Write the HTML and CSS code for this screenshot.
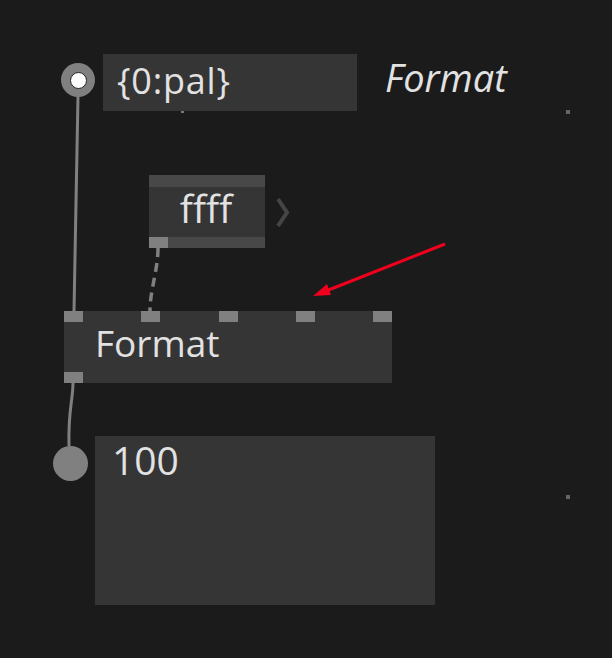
FILE: index.html
```html
<!DOCTYPE html>
<html>
<head>
<meta charset="utf-8">
<link rel="stylesheet" href="styles.css">
</head>
<body>
<div class="canvas">
  <svg class="wires" width="612" height="658" viewBox="0 0 612 658">
    <path d="M78 96 L74 311" class="wire"/>
    <path d="M158 248 C158 270 150 290 150 311" class="wire dashed"/>
    <path d="M73 383 C73 400 68 410 69 446" class="wire"/>
    <polyline points="278,199 287,212.5 278,226" class="chevron"/>
    <line x1="445" y1="244" x2="326" y2="291" class="arrow-line"/>
    <polygon points="313,296 327,284 331,295" class="arrow-head"/>
  </svg>

  <div class="iobox-in">
    <span class="io-label">{0:pal}</span>
    <span class="tick"></span>
  </div>
  <div class="pin-in"><span class="pin-in-core"></span></div>

  <div class="comment">Format</div>
  <div class="dot dot-a"></div>
  <div class="dot dot-b"></div>

  <div class="node-ffff">
    <div class="bar"></div>
    <div class="ffff-body">ffff</div>
    <div class="bar bar-bottom"><span class="pin"></span></div>
  </div>

  <div class="node-format">
    <div class="pins-top">
      <span class="pin"></span><span class="pin"></span><span class="pin"></span><span class="pin"></span><span class="pin"></span>
    </div>
    <div class="format-label">Format</div>
    <div class="pins-bottom"><span class="pin"></span></div>
  </div>

  <div class="pin-out"></div>
  <div class="iobox-out">100</div>
</div>
</body>
</html>
```

FILE: styles.css
```css
html, body {
  margin: 0;
  padding: 0;
  background: #1b1b1b;
}
.canvas {
  position: relative;
  width: 612px;
  height: 658px;
  overflow: hidden;
  background: #1b1b1b;
  font-family: "Open Sans", "Noto Sans", sans-serif;
  color: #e2e2e2;
}
.wires {
  position: absolute;
  left: 0;
  top: 0;
  z-index: 1;
}
.wire {
  fill: none;
  stroke: #808080;
  stroke-width: 3;
}
.dashed {
  stroke-dasharray: 9 6;
  stroke-width: 3.5;
}
.chevron {
  fill: none;
  stroke: #454545;
  stroke-width: 4;
}
.arrow-line {
  stroke: #f0001c;
  stroke-width: 3;
}
.arrow-head {
  fill: #f0001c;
}
.iobox-in {
  position: absolute;
  left: 103px;
  top: 54px;
  width: 254px;
  height: 57px;
  background: #353535;
  box-sizing: border-box;
  padding-left: 14px;
  padding-top: 5px;
  font-size: 36px;
  line-height: 44px;
  letter-spacing: 0.8px;
}
.tick {
  position: absolute;
  left: 78px;
  top: 57px;
  width: 3px;
  height: 2px;
  background: #777;
}
.pin-in {
  position: absolute;
  left: 61px;
  top: 63px;
  width: 34px;
  height: 34px;
  border-radius: 50%;
  background: #808080;
  display: flex;
  align-items: center;
  justify-content: center;
  z-index: 2;
}
.pin-in-core {
  width: 15px;
  height: 15px;
  border-radius: 50%;
  background: #fff;
  border: 1px solid #222;
}
.comment {
  position: absolute;
  left: 385px;
  top: 55px;
  font-size: 38px;
  font-style: italic;
  line-height: 44px;
}
.dot {
  position: absolute;
  width: 4px;
  height: 4px;
  background: #666;
}
.dot-a { left: 566px; top: 110px; }
.dot-b { left: 566px; top: 495px; }
.node-ffff {
  position: absolute;
  left: 149px;
  top: 175px;
  width: 116px;
  height: 73px;
  display: flex;
  flex-direction: column;
  background: #353535;
}
.bar {
  height: 12px;
  background: #484848;
  position: relative;
}
.bar-bottom {
  height: 11px;
}
.ffff-body {
  height: 50px;
  box-sizing: border-box;
  font-size: 39px;
  line-height: 41px;
  padding-bottom: 9px;
  text-align: center;
  padding-right: 2px;
}
.node-ffff .pin {
  position: absolute;
  left: 0;
  top: 0;
  width: 19px;
  height: 11px;
  background: #808080;
}
.node-format {
  position: absolute;
  left: 64px;
  top: 311px;
  width: 328px;
  height: 72px;
  background: #353535;
  z-index: 2;
  display: flex;
  flex-direction: column;
}
.pins-top {
  display: flex;
  justify-content: space-between;
  height: 11px;
}
.pin {
  display: block;
  width: 19px;
  height: 11px;
  background: #808080;
}
.format-label {
  height: 50px;
  padding-left: 31px;
  font-size: 37px;
  line-height: 48px;
  margin-top: -3px;
  margin-bottom: 3px;
}
.pins-bottom {
  height: 11px;
  display: flex;
}
.pin-out {
  position: absolute;
  left: 53px;
  top: 446px;
  width: 35px;
  height: 35px;
  border-radius: 50%;
  background: #808080;
  z-index: 2;
}
.iobox-out {
  position: absolute;
  left: 95px;
  top: 436px;
  width: 340px;
  height: 169px;
  background: #353535;
  box-sizing: border-box;
  padding-left: 17px;
  font-size: 39px;
  line-height: 48px;
}
```
